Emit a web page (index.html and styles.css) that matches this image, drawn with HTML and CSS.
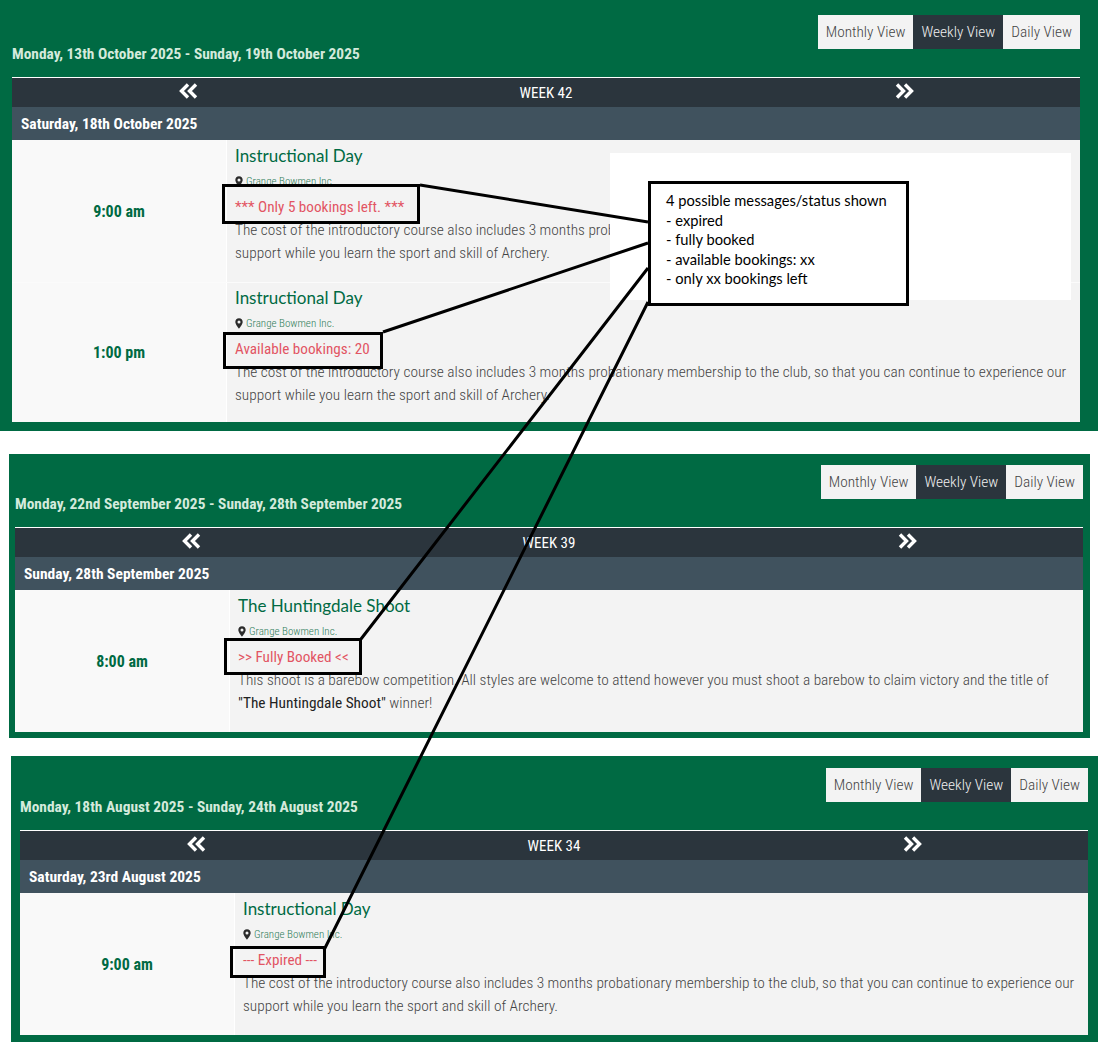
FILE: index.html
```html
<!DOCTYPE html>
<html lang="en">
<head>
<meta charset="utf-8">
<title>Booking status messages</title>
<link rel="stylesheet" href="styles.css">
</head>
<body>
<svg width="0" height="0" class="defs">
  <symbol id="pin" viewBox="0 0 10 13"><path fill-rule="evenodd" d="M5 0C2.200 0 .4 2 .4 4.500.4 7.600 5 13 5 13s4.600-5.400 4.600-8.500C9.600 2 7.800 0 5 0zm0 2.700a1.900 1.900 0 1 1 0 3.800 1.900 1.900 0 0 1 0-3.800z"/></symbol>
  <symbol id="dbl-l" viewBox="0 0 19 16"><path d="M9 1.500 2.500 8 9 14.500M17 1.500 10.500 8l6.500 6.500" fill="none" stroke="#fff" stroke-width="3.400"/></symbol>
  <symbol id="dbl-r" viewBox="0 0 19 16"><path d="M2 1.500 8.500 8 2 14.500M10 1.500 16.500 8 10 14.500" fill="none" stroke="#fff" stroke-width="3.400"/></symbol>
</svg>

<section class="panel p1">
  <div class="head">
    <h2 class="range">Monday, 13th October 2025 - Sunday, 19th October 2025</h2>
    <div class="views"><a class="view">Monthly View</a><a class="view on">Weekly View</a><a class="view">Daily View</a></div>
  </div>
  <div class="weekbar"><span class="nav"><svg class="chev"><use href="#dbl-l"/></svg></span><span class="wk">WEEK 42</span><span class="nav"><svg class="chev"><use href="#dbl-r"/></svg></span></div>
  <div class="day">Saturday, 18th October 2025</div>
  <div class="row">
    <div class="time">9:00 am</div>
    <div class="info">
      <h3 class="name">Instructional Day</h3>
      <p class="loc"><svg class="pin"><use href="#pin"/></svg>Grange Bowmen Inc.</p>
      <p class="status">*** Only 5 bookings left. ***</p>
      <p class="desc">The cost of the introductory course also includes 3 months probationary membership to the club, so that you can continue to experience our support while you learn the sport and skill of Archery.</p>
    </div>
  </div>
  <div class="row">
    <div class="time">1:00 pm</div>
    <div class="info">
      <h3 class="name">Instructional Day</h3>
      <p class="loc"><svg class="pin"><use href="#pin"/></svg>Grange Bowmen Inc.</p>
      <p class="status">Available bookings: 20</p>
      <p class="desc">The cost of the introductory course also includes 3 months probationary membership to the club, so that you can continue to experience our support while you learn the sport and skill of Archery.</p>
    </div>
  </div>
</section>

<section class="panel p2">
  <div class="head">
    <h2 class="range">Monday, 22nd September 2025 - Sunday, 28th September 2025</h2>
    <div class="views"><a class="view">Monthly View</a><a class="view on">Weekly View</a><a class="view">Daily View</a></div>
  </div>
  <div class="weekbar"><span class="nav"><svg class="chev"><use href="#dbl-l"/></svg></span><span class="wk">WEEK 39</span><span class="nav"><svg class="chev"><use href="#dbl-r"/></svg></span></div>
  <div class="day">Sunday, 28th September 2025</div>
  <div class="row">
    <div class="time">8:00 am</div>
    <div class="info">
      <h3 class="name">The Huntingdale Shoot</h3>
      <p class="loc"><svg class="pin"><use href="#pin"/></svg>Grange Bowmen Inc.</p>
      <p class="status">&gt;&gt; Fully Booked &lt;&lt;</p>
      <p class="desc">This shoot is a barebow competition. All styles are welcome to attend however you must shoot a barebow to claim victory and the title of <b>"The Huntingdale Shoot"</b> winner!</p>
    </div>
  </div>
</section>

<section class="panel p3">
  <div class="head">
    <h2 class="range">Monday, 18th August 2025 - Sunday, 24th August 2025</h2>
    <div class="views"><a class="view">Monthly View</a><a class="view on">Weekly View</a><a class="view">Daily View</a></div>
  </div>
  <div class="weekbar"><span class="nav"><svg class="chev"><use href="#dbl-l"/></svg></span><span class="wk">WEEK 34</span><span class="nav"><svg class="chev"><use href="#dbl-r"/></svg></span></div>
  <div class="day">Saturday, 23rd August 2025</div>
  <div class="row">
    <div class="time">9:00 am</div>
    <div class="info">
      <h3 class="name">Instructional Day</h3>
      <p class="loc"><svg class="pin"><use href="#pin"/></svg>Grange Bowmen Inc.</p>
      <p class="status">--- Expired ---</p>
      <p class="desc">The cost of the introductory course also includes 3 months probationary membership to the club, so that you can continue to experience our support while you learn the sport and skill of Archery.</p>
    </div>
  </div>
</section>

<div class="patch"></div>
<svg class="lines" viewBox="0 0 1098 1042">
  <g fill="none" stroke="#000" stroke-width="3">
    <path d="M420 185 648 222M383 332 648 243M361 639 648 268M324 950 648 302"/>
    <rect x="223.500" y="185.500" width="195" height="37"/>
    <rect x="224.500" y="333.500" width="157" height="34"/>
    <rect x="225.500" y="639.500" width="135" height="34"/>
    <rect x="231.500" y="947.500" width="93" height="29"/>
  </g>
</svg>
<div class="note">4 possible messages/status shown<br>- expired<br>- fully booked<br>- available bookings: xx<br>- only xx bookings left</div>
</body>
</html>
```
FILE: styles.css
```css
* { box-sizing: border-box; }
html, body { margin: 0; padding: 0; }
body { position: relative; width: 1098px; height: 1042px; overflow: hidden; background: #fff; font-family: Roboto, "Liberation Sans", sans-serif; font-stretch: 75%; }
.defs { position: absolute; }
.panel { background: #006a43; }
.p1 { width: 1098px; padding: 0 18px 9px 12px; }
.p2 { width: 1081px; margin: 23px 0 0 9px; padding: 0 7px 6px 6px; }
.p3 { width: 1087px; margin: 18px 0 0 11px; padding: 0 10px 7px 9px; }
.head { display: flex; justify-content: space-between; align-items: flex-start; padding-top: 15px; height: 77px; }
.p2 .head { padding-top: 11px; height: 73px; }
.p3 .head { padding-top: 12px; height: 74px; }
.range { margin: 30px 0 0; font-size: 15.400px; line-height: 18px; font-weight: 700; color: #d4eadc; }
.views { display: flex; }
.view { height: 34px; padding: 0 8px; font-size: 15.300px; line-height: 35px; font-weight: 300; color: #444; background: #f3f3f3; }
.view.on { background: #2b353d; color: #f0f0f0; }
.weekbar { display: flex; height: 30px; border-top: 1px solid #fff; background: #2b353d; color: #fff; font-size: 15px; }
.nav { width: 352px; text-align: center; }
.wk { flex: 1; text-align: center; line-height: 30px; font-weight: 400; }
.chev { width: 19px; height: 16px; margin-top: 5px; }
.day { height: 33px; padding-left: 9px; background: #40525e; color: #fff; font-size: 15.500px; font-weight: 700; line-height: 34px; }
.row { display: flex; background: #fff; }
.row + .row { border-top: 1px solid #fbfbfb; }
.time { width: 214px; flex: none; display: flex; align-items: center; justify-content: center; background: #f9f9f9; color: #006a43; font-size: 16px; font-weight: 700; }
.info { flex: 1; margin-left: 1px; padding: 3px 9px 15px 8px; background: #f3f3f3; }
.day + .row .info { padding-top: 4px; padding-bottom: 17px; }
.name { margin: 0; font-family: Lato, sans-serif; font-stretch: normal; font-size: 17px; line-height: 23px; font-weight: 400; color: #006a43; }
.loc { display: flex; align-items: center; gap: 3px; margin: 7px 0 0; height: 14px; font-size: 11px; font-weight: 300; color: #2f7d5a; }
.pin { width: 8px; height: 11px; fill: #2b2b2b; }
.status { margin: 8px 0 0; font-size: 15.200px; line-height: 23px; color: #e25563; }
.desc { margin: 0; font-size: 15.350px; line-height: 23px; font-weight: 300; color: #444; }
.desc b { font-weight: 400; color: #222; }
.patch { position: absolute; left: 610px; top: 153px; width: 461px; height: 147px; background: #fff; }
.lines { position: absolute; left: 0; top: 0; width: 1098px; height: 1042px; }
.note { position: absolute; left: 648px; top: 181px; width: 261px; height: 125px; padding: 7px 0 0 15px; border: 3px solid #000; background: #fff; color: #000; font-family: Lato, sans-serif; font-stretch: normal; font-size: 14.700px; line-height: 19.500px; }
```
